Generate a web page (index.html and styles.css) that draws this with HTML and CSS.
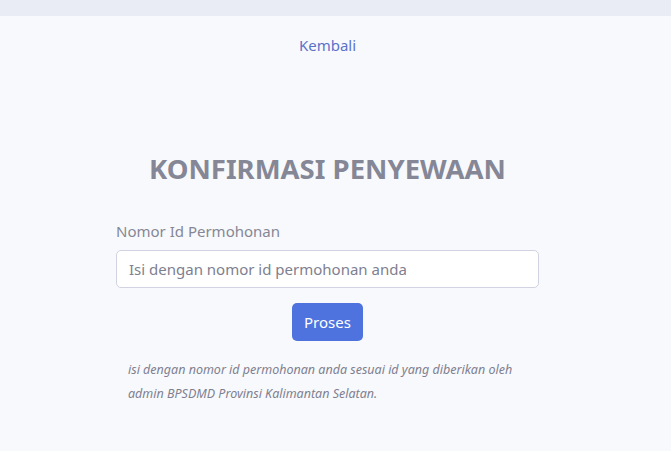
FILE: index.html
```html
<!DOCTYPE html>
<html lang="id">
<head>
<meta charset="utf-8">
<title>Konfirmasi Penyewaan</title>
<link rel="stylesheet" href="styles.css">
</head>
<body>
<div class="topbar"></div>
<main class="main">
  <div class="back-row"><a class="back" href="#">Kembali</a></div>
  <div class="card">
    <h1 class="title">KONFIRMASI PENYEWAAN</h1>
    <form class="form">
      <label class="label" for="id">Nomor Id Permohonan</label>
      <input class="input" id="id" type="text" placeholder="Isi dengan nomor id permohonan anda">
      <div class="btn-row"><button class="btn" type="button">Proses</button></div>
      <p class="note">isi dengan nomor id permohonan anda sesuai id yang diberikan oleh admin BPSDMD Provinsi Kalimantan Selatan.</p>
    </form>
  </div>
</main>
</body>
</html>
```
FILE: styles.css
```css
html, body {
  margin: 0;
  padding: 0;
  background: #f8f9fc;
  font-family: "Noto Sans", "Open Sans", sans-serif;
  color: #858796;
}
.topbar {
  height: 16px;
  background: #e9ecf4;
}
.main {
  width: calc(100% - 16px);
}
.back-row {
  display: flex;
  justify-content: center;
  padding-top: 19px;
}
.back {
  color: #5b72c9;
  text-decoration: none;
  font-size: 15px;
  line-height: 20px;
}
.card {
  width: 423px;
  margin: 0 auto;
  padding-top: 96px;
}
.title {
  margin: 0;
  text-align: center;
  font-size: 27.5px;
  font-weight: 700;
  color: #858796;
  line-height: 36px;
}
.form {
  display: flex;
  flex-direction: column;
  margin-top: 34px;
}
.label {
  font-size: 15px;
  line-height: 20px;
  color: #858796;
  margin-bottom: 9px;
}
.input {
  box-sizing: border-box;
  height: 38px;
  border: 1px solid #d1d3e2;
  border-radius: 5px;
  background: #fff;
  padding: 0 12px;
  font-family: inherit;
  font-size: 15px;
  color: #6e707e;
}
.input::placeholder {
  color: #7e8090;
}
.btn-row {
  display: flex;
  justify-content: center;
  margin-top: 15px;
}
.btn {
  width: 71px;
  height: 38px;
  border: none;
  border-radius: 5px;
  background: #4e73df;
  color: #fff;
  font-family: inherit;
  font-size: 15px;
  padding: 0;
}
.note {
  margin: 17px 0 0;
  padding: 0 12px;
  font-size: 12.5px;
  line-height: 24px;
  font-style: italic;
  color: #7e8090;
}
```
